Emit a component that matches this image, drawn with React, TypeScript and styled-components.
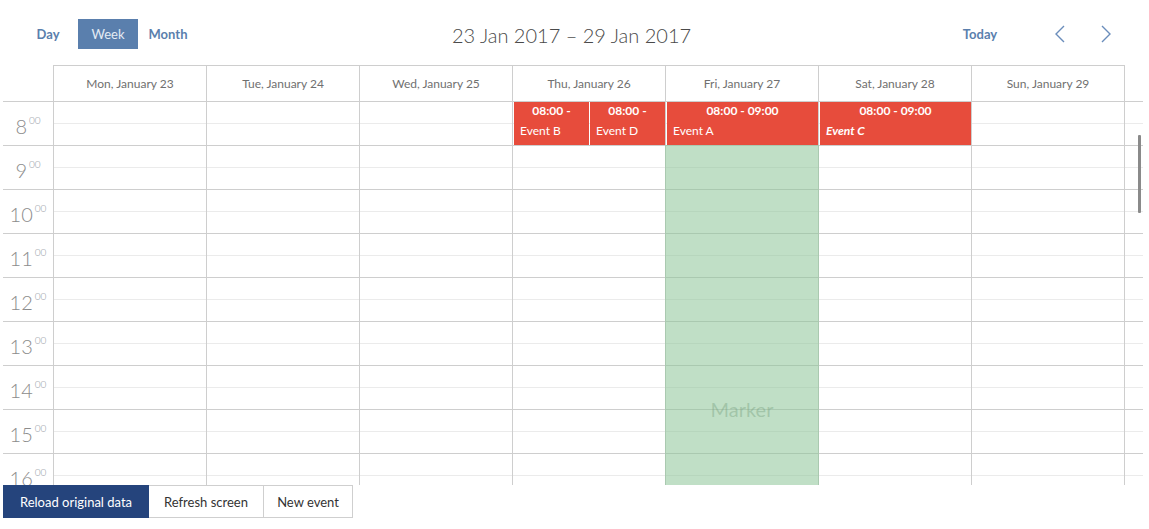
import React from "react";
import styled, { createGlobalStyle } from "styled-components";

const GlobalStyle = createGlobalStyle`
  html, body {
    margin: 0;
    padding: 0;
    background: #fff;
  }
  body {
    font-family: Lato, "Open Sans", sans-serif;
    color: #444;
  }
`;

const LINE = "#cecece";
const HALF = "#ebebeb";
const ACCENT = "#5a7fad";
const HOUR = 44;

const Page = styled.div`
  width: 1149px;
  height: 529px;
  padding-left: 3px;
  box-sizing: border-box;
  overflow: hidden;
`;

const NavLine = styled.div`
  height: 65px;
  box-sizing: border-box;
  padding: 19px 20px 0 15px;
  display: grid;
  grid-template-columns: 1fr auto 1fr;
  align-items: start;
`;

const Tabs = styled.div`
  display: flex;
`;

const Tab = styled.div<{ $active?: boolean }>`
  width: 60px;
  height: 30px;
  display: flex;
  align-items: center;
  justify-content: center;
  font-size: 13px;
  font-weight: ${({ $active }) => ($active ? 400 : 700)};
  color: ${({ $active }) => ($active ? "#e4ebf4" : ACCENT)};
  background: ${({ $active }) => ($active ? ACCENT : "transparent")};
`;

const Title = styled.div`
  font-size: 20px;
  font-weight: 300;
  color: #4a4a4a;
  line-height: 33px;
  margin-left: -4px;
`;

const NavRight = styled.div`
  justify-self: end;
  display: flex;
  align-items: center;
`;

const TodayButton = styled.div`
  width: 60px;
  height: 30px;
  display: flex;
  align-items: center;
  justify-content: center;
  font-size: 13px;
  font-weight: 700;
  color: ${ACCENT};
  margin-right: 27px;
`;

const Arrow = styled.div`
  width: 46px;
  height: 30px;
  display: flex;
  align-items: center;
  justify-content: center;
`;

const columns = `51px repeat(7, 153px) 18px`;

const DateHeader = styled.div`
  display: grid;
  grid-template-columns: ${columns};
  border-bottom: 1px solid ${LINE};
  width: 1140px;
`;

const Corner = styled.div`
  border-right: 1px solid ${LINE};
`;

const DayTitle = styled.div`
  height: 35px;
  border-top: 1px solid ${LINE};
  border-right: 1px solid ${LINE};
  display: flex;
  align-items: center;
  justify-content: center;
  font-size: 12px;
  color: #707070;
`;

const Body = styled.div`
  position: relative;
  width: 1140px;
  height: 383px;
  overflow: hidden;
  display: grid;
  grid-template-columns: ${columns};
  align-items: start;
`;

const TimeScale = styled.div`
  border-right: 1px solid ${LINE};
`;

const HourLabel = styled.div`
  height: ${HOUR}px;
  box-sizing: border-box;
  border-bottom: 1px solid ${LINE};
  display: flex;
  align-items: center;
  justify-content: center;
  padding-top: 4px;
  font-size: 20px;
  font-weight: 300;
  color: #8c8c8c;
`;

const Minutes = styled.span`
  font-size: 10px;
  position: relative;
  top: -6px;
  margin-left: 2px;
  color: #8f96a0;
`;

const DayColumn = styled.div<{ $last?: boolean }>`
  position: relative;
  border-right: ${({ $last }) => ($last ? "none" : `1px solid ${LINE}`)};
`;

const HourCell = styled.div`
  position: relative;
  height: ${HOUR}px;
  box-sizing: border-box;
  border-bottom: 1px solid ${LINE};

  &::after {
    content: "";
    position: absolute;
    left: 0;
    right: 0;
    top: 21px;
    height: 1px;
    background: ${HALF};
  }
`;

const Event = styled.div<{ $left: number; $width: number }>`
  position: absolute;
  top: 0;
  left: ${({ $left }) => $left}px;
  width: ${({ $width }) => $width}px;
  height: 43px;
  background: #e74c3c;
  color: #fff;
  z-index: 2;
  overflow: hidden;
`;

const EventHead = styled.div`
  height: 17px;
  line-height: 17px;
  overflow: hidden;
  text-align: center;
  padding: 0 7px;
  font-size: 12px;
  font-weight: 700;
`;

const EventText = styled.div<{ $italic?: boolean }>`
  padding: 4px 6px 0;
  line-height: 16px;
  font-size: 12px;
  white-space: nowrap;
  font-style: ${({ $italic }) => ($italic ? "italic" : "normal")};
  font-weight: ${({ $italic }) => ($italic ? 700 : 400)};
`;

const Marker = styled.div`
  position: absolute;
  left: -1px;
  width: 154px;
  top: ${HOUR - 1}px;
  height: ${HOUR * 12}px;
  background: rgba(140, 196, 152, 0.55);
  z-index: 1;
  display: flex;
  align-items: center;
  justify-content: center;
  font-size: 20px;
  color: rgba(120, 160, 128, 0.42);
`;

const ScrollThumb = styled.div`
  position: absolute;
  left: 1135px;
  top: 33px;
  width: 3px;
  height: 78px;
  background: #8a8a8a;
  border-radius: 1px;
  z-index: 3;
`;

const Actions = styled.div`
  display: flex;
`;

const ActionButton = styled.div<{ $primary?: boolean; $width: number }>`
  width: ${({ $width }) => $width}px;
  height: 33px;
  box-sizing: border-box;
  display: flex;
  align-items: center;
  justify-content: center;
  font-size: 13px;
  color: ${({ $primary }) => ($primary ? "#fff" : "#333")};
  background: ${({ $primary }) => ($primary ? "#25447c" : "#fff")};
  border: 1px solid ${({ $primary }) => ($primary ? "#25447c" : "#cfcfcf")};
  border-left-width: ${({ $primary }) => ($primary ? 1 : 0)}px;
`;

const days = [
  "Mon, January 23",
  "Tue, January 24",
  "Wed, January 25",
  "Thu, January 26",
  "Fri, January 27",
  "Sat, January 28",
  "Sun, January 29",
];

const hours = Array.from({ length: 16 }, (_, i) => i + 8);

type Ev = { day: number; left: number; width: number; text: string; italic?: boolean };

const events: Ev[] = [
  { day: 3, left: 1, width: 75, text: "Event B" },
  { day: 3, left: 77, width: 75, text: "Event D" },
  { day: 4, left: 1, width: 151, text: "Event A" },
  { day: 5, left: 1, width: 151, text: "Event C", italic: true },
];

const Chevron = ({ dir }: { dir: "left" | "right" }) => (
  <svg width="10" height="18" viewBox="0 0 10 18">
    <polyline
      points={dir === "left" ? "9,1 1,9 9,17" : "1,1 9,9 1,17"}
      fill="none"
      stroke="#6a8dbb"
      strokeWidth="1.4"
    />
  </svg>
);

const Cells = () => (
  <>
    {hours.map((h) => (
      <HourCell key={h} />
    ))}
  </>
);

export default function App() {
  return (
    <>
      <GlobalStyle />
      <Page>
        <NavLine>
          <Tabs>
            <Tab>Day</Tab>
            <Tab $active>Week</Tab>
            <Tab>Month</Tab>
          </Tabs>
          <Title>23 Jan 2017 – 29 Jan 2017</Title>
          <NavRight>
            <TodayButton>Today</TodayButton>
            <Arrow>
              <Chevron dir="left" />
            </Arrow>
            <Arrow>
              <Chevron dir="right" />
            </Arrow>
          </NavRight>
        </NavLine>

        <DateHeader>
          <Corner />
          {days.map((d) => (
            <DayTitle key={d}>{d}</DayTitle>
          ))}
          <div />
        </DateHeader>

        <Body>
          <TimeScale>
            {hours.map((h) => (
              <HourLabel key={h}>
                {h}
                <Minutes>00</Minutes>
              </HourLabel>
            ))}
          </TimeScale>
          {days.map((d, i) => (
            <DayColumn key={d}>
              <Cells />
              {events
                .filter((e) => e.day === i)
                .map((e) => (
                  <Event key={e.text} $left={e.left} $width={e.width}>
                    <EventHead>08:00 - 09:00</EventHead>
                    <EventText $italic={e.italic}>{e.text}</EventText>
                  </Event>
                ))}
              {i === 4 && <Marker>Marker</Marker>}
            </DayColumn>
          ))}
          <DayColumn $last>
            <Cells />
          </DayColumn>
          <ScrollThumb />
        </Body>

        <Actions>
          <ActionButton $primary $width={146}>Reload original data</ActionButton>
          <ActionButton $width={115}>Refresh screen</ActionButton>
          <ActionButton $width={89}>New event</ActionButton>
        </Actions>
      </Page>
    </>
  );
}
